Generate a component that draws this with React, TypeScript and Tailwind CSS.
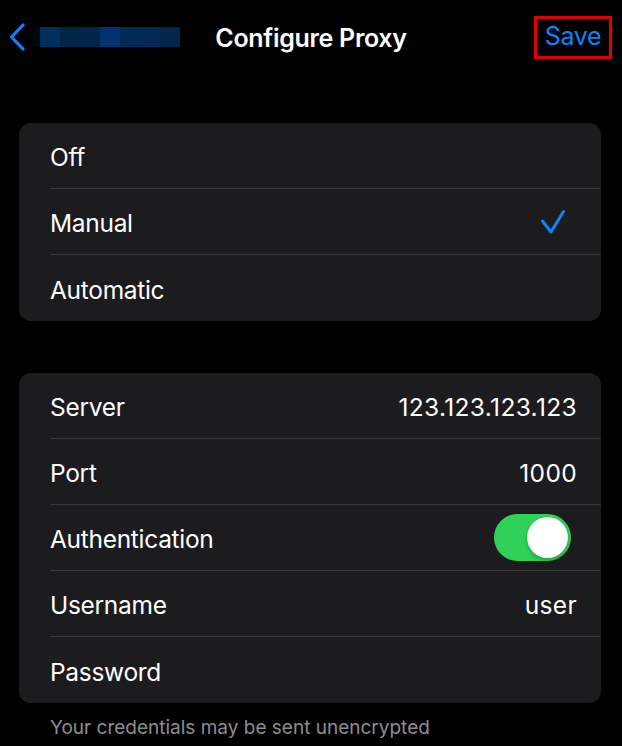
const font = { fontFamily: 'Inter, "Noto Sans", "Liberation Sans", sans-serif' }

const mosaic = ['#01050c', '#002f5e', '#012545', '#02254a', '#003370', '#012a58', '#022a55', '#01284a']

function Row({ label, children, last }: { label: string; children?: React.ReactNode; last?: boolean }) {
  return (
    <div className="flex h-[66px] items-stretch pl-[31px]">
      <div className={`flex flex-1 items-center justify-between pr-[24px] ${last ? '' : 'border-b border-[#38383a]'}`}>
        <span className="pt-[4px] text-[24.5px] tracking-[-0.3px] text-white">{label}</span>
        {children}
      </div>
    </div>
  )
}

function Value({ children }: { children: React.ReactNode }) {
  return <span className="pt-[4px] text-[24.5px] tracking-[0.35px] text-white">{children}</span>
}

function Toggle() {
  return (
    <div className="mr-[6px] flex h-[47px] w-[77px] items-center justify-end rounded-full bg-[#30d158] pr-[3px]">
      <div className="h-[41px] w-[41px] rounded-full bg-white shadow-[0_2px_4px_rgba(0,0,0,0.25)]" />
    </div>
  )
}

export default function App() {
  return (
    <div className="min-h-[746px] w-full bg-black" style={font}>
      <header className="grid h-[74px] grid-cols-[1fr_auto_1fr] items-center">
        <div className="flex items-center gap-[8px] pl-[9px]">
          <svg width="16" height="28" viewBox="0 0 16 28" fill="none">
            <path d="M14 2 L2.5 14 L14 26" stroke="#0a84ff" strokeWidth="3.2" strokeLinecap="round" strokeLinejoin="round" />
          </svg>
          <div className="flex h-[20px]">
            <div className="w-[7px]" style={{ background: mosaic[0] }} />
            {mosaic.slice(1).map((c, i) => (
              <div key={i} className="w-[20px]" style={{ background: c }} />
            ))}
          </div>
        </div>
        <h1 className="pt-[3px] text-[25px] font-semibold tracking-[-0.3px] text-white">Configure Proxy</h1>
        <div className="flex justify-end pr-[10px]">
          <div className="flex h-[43px] w-[78px] items-center justify-center border-[3px] border-[#e00000]">
            <span className="text-[25px] tracking-[-0.3px] text-[#0a84ff]">Save</span>
          </div>
        </div>
      </header>

      <div className="pl-[19px] pr-[21px] pt-[49px]">
        <section className="overflow-hidden rounded-[12px] bg-[#1c1c1e]">
          <Row label="Off" />
          <Row label="Manual">
            <svg width="26" height="26" viewBox="0 0 26 26" fill="none" className="mr-[11px]">
              <path d="M2.5 12 L11 23 L23.5 2.5" stroke="#0a84ff" strokeWidth="3" strokeLinecap="round" strokeLinejoin="round" />
            </svg>
          </Row>
          <Row label="Automatic" last />
        </section>

        <section className="mt-[52px] overflow-hidden rounded-[12px] bg-[#1c1c1e]">
          <Row label="Server">
            <Value>123.123.123.123</Value>
          </Row>
          <Row label="Port">
            <Value>1000</Value>
          </Row>
          <Row label="Authentication">
            <Toggle />
          </Row>
          <Row label="Username">
            <Value>user</Value>
          </Row>
          <Row label="Password" last />
        </section>

        <p className="pl-[31px] pt-[11px] text-[19px] text-[#8d8d93]">Your credentials may be sent unencrypted</p>
      </div>
    </div>
  )
}
